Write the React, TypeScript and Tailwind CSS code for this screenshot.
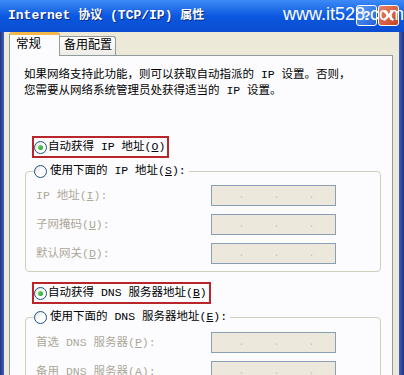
import React from 'react'

const mono = "font-['Liberation_Mono','Noto_Sans_CJK_SC',monospace]"

const Radio = ({ checked }: { checked?: boolean }) => (
  <span className="w-[13px] h-[13px] rounded-full border border-[#1c5180] bg-gradient-to-br from-[#dcdcd5] via-white to-white flex items-center justify-center shrink-0">
    {checked && <span className="w-[5px] h-[5px] rounded-full bg-gradient-to-br from-[#6ee06e] to-[#1f9a1f]" />}
  </span>
)

const IpBox = () => (
  <div className="w-[125px] h-[21px] border border-[#8a9fb5] bg-[#ece9dc] flex items-center justify-center gap-[29px] pl-[6px] text-[#c7c2b0] text-[10px] leading-none">
    <span>.</span>
    <span>.</span>
    <span>.</span>
  </div>
)

const Row = ({ label, mnemonic }: { label: string; mnemonic: string }) => (
  <div className="flex items-center h-[21px]">
    <span className="w-[175px] text-[#aca899] whitespace-nowrap">
      {label}(<u>{mnemonic}</u>):
    </span>
    <IpBox />
  </div>
)

const App: React.FC = () => {
  return (
    <div className={`w-[404px] h-[375px] overflow-hidden bg-[#ece9d8] text-[11.5px] text-black ${mono}`}>
      {/* title bar */}
      <div className="relative h-[32px] bg-gradient-to-b from-[#3d8af7] via-[#0b58e0] to-[#0a4ccf] flex items-center pl-[8px]">
        <span className="text-white text-[13px] font-bold whitespace-pre [text-shadow:1px_1px_0_#0a2a80]">
          Internet <span className="text-[12px]">协议</span> (TCP/IP) <span className="text-[12px]">属性</span>
        </span>
        <div className="absolute left-[356px] top-[5px] w-[21px] h-[21px] rounded-[3px] border border-white bg-gradient-to-br from-[#5a9cf7] to-[#2463d8] flex items-center justify-center text-white font-bold text-[13px] font-['Liberation_Sans',sans-serif]">
          ?
        </div>
        <div className="absolute left-[378px] top-[5px] w-[21px] h-[21px] rounded-[3px] border border-white bg-gradient-to-br from-[#e8846a] to-[#c8411f] flex items-center justify-center">
          <svg width="11" height="11" viewBox="0 0 11 11">
            <path d="M1.5 1.5 L9.5 9.5 M9.5 1.5 L1.5 9.5" stroke="white" strokeWidth="2.2" strokeLinecap="square" />
          </svg>
        </div>
        <span className="absolute left-[283px] top-[3px] text-white text-[18px] leading-[22px] font-['Liberation_Sans',sans-serif]">
          www.it528.com
        </span>
      </div>

      <div className="flex h-[343px]">
        <div className="w-[4px] bg-gradient-to-r from-[#23307a] to-[#3e62c8]" />
        <div className="flex-1 flex flex-col">
          {/* tabs */}
          <div className="flex items-end h-[26px] ml-[5px]">
            <div className="relative z-10 -mb-px w-[51px] h-[24px] border border-[#919b9c] border-b-0 border-t-[3px] border-t-[#f4b74a] rounded-t-[3px] bg-[#fcfcfe] pl-[6px] pt-[1px] text-[12.5px]">
              常规
            </div>
            <div className="w-[56px] h-[19px] border border-[#919b9c] border-b-0 border-l-0 rounded-tr-[3px] bg-gradient-to-b from-white to-[#ecebe6] pl-[4px] text-[12px] leading-[18px]">
              备用配置
            </div>
          </div>

          {/* panel */}
          <div className="flex-1 ml-[5px] mr-[6px] border border-[#919b9c] bg-[#fcfcfe]">
            <div className="mt-[11px] ml-[14px] leading-[16px] whitespace-nowrap">
              <div>如果网络支持此功能，则可以获取自动指派的 IP 设置。否则，</div>
              <div>您需要从网络系统管理员处获得适当的 IP 设置。</div>
            </div>

            <div className="mt-[37px] ml-[22px] w-fit pr-[2px] h-[22px] border-2 border-[#b8262c] flex items-center gap-[1px] whitespace-nowrap">
              <Radio checked />
              <span>自动获得 IP 地址(<u>O</u>)</span>
            </div>

            <fieldset className="mt-[2px] ml-[15px] w-[356px] border border-[#d0d0bf] rounded-[4px] px-[10px] pb-[7px]">
              <legend className="-ml-[2px] h-[22px] flex items-center gap-[3px] pr-[3px] whitespace-nowrap">
                <Radio />
                <span>使用下面的 IP 地址(<u>S</u>):</span>
              </legend>
              <div className="mt-[3px] flex flex-col gap-[8px]">
                <Row label="IP 地址" mnemonic="I" />
                <Row label="子网掩码" mnemonic="U" />
                <Row label="默认网关" mnemonic="D" />
              </div>
            </fieldset>

            <div className="mt-[10px] ml-[22px] w-fit pr-[2px] h-[22px] border-2 border-[#b8262c] flex items-center gap-[1px] whitespace-nowrap">
              <Radio checked />
              <span>自动获得 DNS 服务器地址(<u>B</u>)</span>
            </div>

            <fieldset className="mt-[2px] ml-[15px] w-[356px] border border-[#d0d0bf] rounded-[4px] px-[10px] pb-[7px]">
              <legend className="-ml-[2px] h-[22px] flex items-center gap-[3px] pr-[3px] whitespace-nowrap">
                <Radio />
                <span>使用下面的 DNS 服务器地址(<u>E</u>):</span>
              </legend>
              <div className="mt-[4px] flex flex-col gap-[8px]">
                <Row label="首选 DNS 服务器" mnemonic="P" />
                <Row label="备用 DNS 服务器" mnemonic="A" />
              </div>
            </fieldset>
          </div>
        </div>
        <div className="w-[5px] bg-gradient-to-r from-[#3e62c8] to-[#23307a]" />
      </div>
    </div>
  )
}

export default App
